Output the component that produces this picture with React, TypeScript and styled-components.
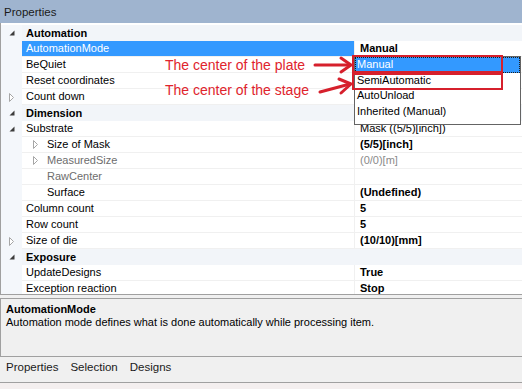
import styled, { createGlobalStyle, css } from "styled-components";

const GlobalStyle = createGlobalStyle`
  html, body {
    margin: 0;
    padding: 0;
    width: 522px;
    height: 389px;
    overflow: hidden;
    background: #f0f0f0;
  }

  body {
    font-family: "Liberation Sans", Arial, sans-serif;
    font-size: 11px;
    color: #000;
  }
`;

const Window = styled.div`
  position: relative;
  width: 522px;
  height: 389px;
  display: flex;
  flex-direction: column;
  background: #f0f0f0;
`;

const TitleBar = styled.div`
  flex: none;
  height: 23px;
  display: flex;
  align-items: center;
  padding-left: 4px;
  background: #9fb4cf;
  color: #1a1a1a;
  font-size: 11.5px;
`;

const Grid = styled.div`
  flex: none;
  box-sizing: border-box;
  height: 272px;
  padding-top: 2px;
  background: #fff;
  border-left: 1px solid #a0a0a0;
  border-bottom: 1px solid #a0a0a0;
  overflow: hidden;
`;

const Row = styled.div<{ $category?: boolean }>`
  display: grid;
  grid-template-columns: 21px 332px 1fr;
  height: 16px;
  line-height: 15px;
  white-space: nowrap;
  ${(p) =>
    p.$category &&
    css`
      background: #f2f5f9;
      font-weight: bold;
    `}
`;

const Gutter = styled.div`
  display: flex;
  align-items: center;
  padding-left: 8px;
  background: #f4f7fb;
`;

const NameCell = styled.div<{
  $level?: number;
  $selected?: boolean;
  $muted?: boolean;
}>`
  display: flex;
  align-items: center;
  height: 15px;
  padding-left: ${(p) => (p.$level === 2 ? 11 : 4)}px;
  border-bottom: 1px solid #f0f0f0;
  color: ${(p) => (p.$selected ? "#fff" : p.$muted ? "#6d6d6d" : "#000")};
  background: ${(p) => (p.$selected ? "#3399ff" : "transparent")};
  overflow: hidden;
`;

const CategoryName = styled.div`
  grid-column: 2 / 4;
  padding-left: 4px;
  height: 16px;
  line-height: 16px;
`;

const SubGlyph = styled.span`
  display: inline-flex;
  align-items: center;
  width: 14px;
  flex: none;
`;

const ValueCell = styled.div<{ $bold?: boolean; $muted?: boolean }>`
  height: 15px;
  padding-left: 5px;
  border-left: 1px solid #f0f0f0;
  border-bottom: 1px solid #f0f0f0;
  font-weight: ${(p) => (p.$bold ? "bold" : "normal")};
  color: ${(p) => (p.$muted ? "#8a8a8a" : "#000")};
  overflow: hidden;
`;

const Dropdown = styled.div`
  position: absolute;
  left: 354px;
  top: 56px;
  box-sizing: border-box;
  width: 167px;
  height: 69px;
  background: #fff;
  border: 1px solid #646464;
`;

const DropItem = styled.div<{ $selected?: boolean }>`
  height: 15.5px;
  line-height: 15px;
  padding-left: 2px;
  white-space: nowrap;
  color: ${(p) => (p.$selected ? "#fff" : "#000")};
  background: ${(p) => (p.$selected ? "#3399ff" : "transparent")};
  ${(p) =>
    p.$selected &&
    css`
      outline: 1px dotted #1d1d1d;
      outline-offset: -1px;
    `}
`;

const Mark = styled.div<{ $top: number; $height: number }>`
  position: absolute;
  left: 352px;
  top: ${(p) => p.$top}px;
  box-sizing: border-box;
  width: 151px;
  height: ${(p) => p.$height}px;
  border: 2.5px solid #d6202c;
`;

const Note = styled.div<{ $top: number }>`
  position: absolute;
  left: 165px;
  top: ${(p) => p.$top}px;
  font-size: 14px;
  line-height: 16px;
  color: #e0242d;
  white-space: nowrap;
`;

const Arrows = styled.svg`
  position: absolute;
  left: 0;
  top: 0;
  pointer-events: none;
`;

const DescPane = styled.div`
  flex: none;
  box-sizing: border-box;
  height: 59px;
  margin-top: 3px;
  padding: 4px 5px 0;
  border-top: 1px solid #a0a0a0;
  border-bottom: 1px solid #a0a0a0;
  border-left: 1px solid #a0a0a0;
  line-height: 13px;
`;

const DescTitle = styled.div`
  font-weight: bold;
`;

const TabStrip = styled.div`
  flex: none;
  box-sizing: border-box;
  height: 26px;
  display: flex;
  align-items: flex-start;
  padding-top: 4px;
  border-bottom: 1px solid #a0a0a0;
  font-size: 11.5px;
  line-height: 13px;
`;

const Tab = styled.span`
  padding: 0 6px;
  color: #1a1a1a;
`;

const Footer = styled.div`
  flex: 1;
  background: #f4efef;
`;

function Expanded() {
  return (
    <svg width="6" height="6" viewBox="0 0 6 6">
      <polygon points="5.5,0.5 5.5,5.5 0.5,5.5" fill="#3c3c3c" />
    </svg>
  );
}

function Collapsed() {
  return (
    <svg width="6" height="9" viewBox="0 0 6 9">
      <polygon
        points="0.5,0.5 4.5,4.5 0.5,8.5"
        fill="#fff"
        stroke="#a6a6a6"
        strokeWidth="1"
      />
    </svg>
  );
}

type Prop = {
  name: string;
  category?: boolean;
  value?: string;
  bold?: boolean;
  muted?: boolean;
  selected?: boolean;
  level?: number;
  expander?: "open" | "closed";
};

// values hidden under the open dropdown are left empty
const props: Prop[] = [
  { name: "Automation", category: true, expander: "open" },
  { name: "AutomationMode", value: "Manual", bold: true, selected: true },
  { name: "BeQuiet" },
  { name: "Reset coordinates" },
  { name: "Count down", expander: "closed" },
  { name: "Dimension", category: true, expander: "open" },
  { name: "Substrate", value: "Mask ((5/5)[inch])", expander: "open" },
  { name: "Size of Mask", value: "(5/5)[inch]", bold: true, level: 2, expander: "closed" },
  { name: "MeasuredSize", value: "(0/0)[m]", muted: true, level: 2, expander: "closed" },
  { name: "RawCenter", value: "", muted: true, level: 2 },
  { name: "Surface", value: "(Undefined)", bold: true, level: 2 },
  { name: "Column count", value: "5", bold: true },
  { name: "Row count", value: "5", bold: true },
  { name: "Size of die", value: "(10/10)[mm]", bold: true, expander: "closed" },
  { name: "Exposure", category: true, expander: "open" },
  { name: "UpdateDesigns", value: "True", bold: true },
  { name: "Exception reaction", value: "Stop", bold: true },
];

function GridRow({ p }: { p: Prop }) {
  const glyph = p.expander === "open" ? <Expanded /> : p.expander === "closed" ? <Collapsed /> : null;

  if (p.category) {
    return (
      <Row $category>
        <Gutter>{glyph}</Gutter>
        <CategoryName>{p.name}</CategoryName>
      </Row>
    );
  }

  return (
    <Row>
      <Gutter>{p.level === 2 ? null : glyph}</Gutter>
      <NameCell $level={p.level} $selected={p.selected} $muted={p.muted}>
        {p.level === 2 && <SubGlyph>{glyph}</SubGlyph>}
        {p.name}
      </NameCell>
      <ValueCell $bold={p.bold} $muted={p.muted}>
        {p.value}
      </ValueCell>
    </Row>
  );
}

export default function App() {
  return (
    <>
      <GlobalStyle />
      <Window>
        <TitleBar>Properties</TitleBar>
        <Grid>
          {props.map((p) => (
            <GridRow key={p.name} p={p} />
          ))}
        </Grid>
        <DescPane>
          <DescTitle>AutomationMode</DescTitle>
          <div>Automation mode defines what is done automatically while processing item.</div>
        </DescPane>
        <TabStrip>
          <Tab>Properties</Tab>
          <Tab>Selection</Tab>
          <Tab>Designs</Tab>
        </TabStrip>
        <Footer />

        <Dropdown>
          <DropItem $selected>Manual</DropItem>
          <DropItem>SemiAutomatic</DropItem>
          <DropItem>AutoUnload</DropItem>
          <DropItem>Inherited (Manual)</DropItem>
        </Dropdown>

        <Mark $top={55} $height={18} />
        <Mark $top={73} $height={17} />

        <Note $top={57}>The center of the plate</Note>
        <Note $top={82}>The center of the stage</Note>

        <Arrows width="522" height="389" viewBox="0 0 522 389">
          <g stroke="#d6202c" strokeWidth="3" strokeLinecap="round" strokeLinejoin="round" fill="none">
            <path d="M315 65 L350 65" />
            <path d="M341 58 L351 65 L341 72" />
            <path d="M320 92 L350 84" />
            <path d="M339 79 L351 84 L341 93" />
          </g>
        </Arrows>
      </Window>
    </>
  );
}
